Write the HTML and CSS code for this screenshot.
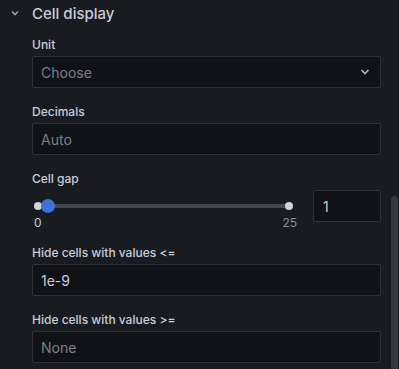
FILE: index.html
```html
<!DOCTYPE html>
<html lang="en">

<head>
    <meta charset="UTF-8">
    <meta name="viewport" content="width=device-width, initial-scale=1.0">
    <title>Cell display</title>
    <link rel="stylesheet" href="styles.css">
</head>

<body>
    <div class="panel">
        <div class="section-header">
            <svg class="caret" width="8" height="6" viewBox="0 0 8 6">
                <path d="M1 1.5 L4 4.5 L7 1.5" fill="none" stroke="#9fa0a8" stroke-width="1.6" />
            </svg>
            <h2>Cell display</h2>
        </div>
        <div class="section-body">
            <div class="field">
                <label>Unit</label>
                <div class="input select">
                    <span class="placeholder">Choose</span>
                    <svg width="10" height="6" viewBox="0 0 10 6">
                        <path d="M1.5 1 L5 4.5 L8.5 1" fill="none" stroke="#b6b7bd" stroke-width="1.6" />
                    </svg>
                </div>
            </div>
            <div class="field">
                <label>Decimals</label>
                <div class="input"><span class="placeholder">Auto</span></div>
            </div>
            <div class="field">
                <label>Cell gap</label>
                <div class="slider-row">
                    <div class="slider">
                        <div class="rail">
                            <span class="dot dot-start"></span>
                            <span class="dot dot-end"></span>
                            <span class="thumb" style="left: 4%"></span>
                        </div>
                        <div class="marks">
                            <span class="mark active">0</span>
                            <span class="mark">25</span>
                        </div>
                    </div>
                    <div class="input small"><span class="value">1</span></div>
                </div>
            </div>
            <div class="field">
                <label>Hide cells with values &lt;=</label>
                <div class="input"><span class="value">1e-9</span></div>
            </div>
            <div class="field">
                <label>Hide cells with values &gt;=</label>
                <div class="input"><span class="placeholder">None</span></div>
            </div>
        </div>
    </div>
    <div class="scrollbar"></div>
</body>

</html>
```

FILE: styles.css
```css
body {
    font-family: 'Inter', 'Liberation Sans', sans-serif;
    margin: 0;
    padding: 0;
    background-color: #181b1f;
    color: #ccccdc;
    width: 399px;
    height: 369px;
    overflow: hidden;
    position: relative;
}

.section-header {
    display: flex;
    align-items: center;
    height: 27px;
    padding-left: 11px;
}

.caret {
    margin-right: 13px;
    margin-top: -1px;
}

.section-header h2 {
    margin: 0;
    font-size: 15px;
    font-weight: 500;
    color: #ccccdc;
}

.section-body {
    padding: 10px 18px 0 32px;
}

.field {
    margin-bottom: 16px;
}

.field label {
    display: block;
    font-size: 12px;
    font-weight: 500;
    line-height: 15px;
    margin-bottom: 4px;
    color: #ccccdc;
}

.input {
    height: 32px;
    box-sizing: border-box;
    background-color: #111217;
    border: 1px solid #2f3136;
    border-radius: 2px;
    display: flex;
    align-items: center;
    padding: 0 8px;
    font-size: 14px;
}

.placeholder {
    color: #7e7f88;
}

.value {
    color: #ccccdc;
}

.select {
    justify-content: space-between;
    padding-right: 10px;
}

.slider-row {
    display: flex;
    align-items: flex-start;
}

.slider {
    flex: 1;
    padding: 0 24px 0 6px;
    height: 39px;
}

.rail {
    position: relative;
    height: 4px;
    margin-top: 14px;
    background-color: #46474d;
    border-radius: 2px;
}

.dot {
    position: absolute;
    top: -2px;
    width: 8px;
    height: 8px;
    border-radius: 50%;
    background-color: #d0d1d9;
}

.dot-start {
    left: -4px;
}

.dot-end {
    right: -4px;
}

.thumb {
    position: absolute;
    top: -5px;
    width: 14px;
    height: 14px;
    margin-left: -7px;
    border-radius: 50%;
    background-color: #3d71d9;
}

.marks {
    display: flex;
    justify-content: space-between;
    margin-top: 8px;
    margin-left: -4px;
    margin-right: -8px;
    font-size: 12px;
    line-height: 14px;
}

.mark {
    color: #8e8e9b;
}

.mark.active {
    color: #ccccdc;
}

.input.small {
    width: 68px;
    padding-left: 9px;
}

.scrollbar {
    position: absolute;
    top: 196px;
    left: 391px;
    width: 7px;
    height: 180px;
    background-color: #36383d;
    border-radius: 4px 4px 0 0;
}
```
